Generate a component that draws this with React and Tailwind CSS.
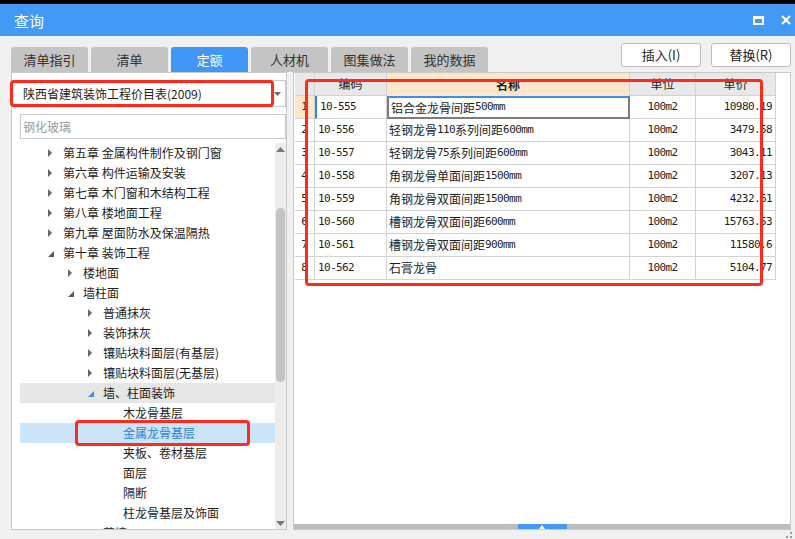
import React from 'react';

const tree = [
  { l: 0, t: '第五章 金属构件制作及钢门窗', a: 'r' },
  { l: 0, t: '第六章 构件运输及安装', a: 'r' },
  { l: 0, t: '第七章 木门窗和木结构工程', a: 'r' },
  { l: 0, t: '第八章 楼地面工程', a: 'r' },
  { l: 0, t: '第九章 屋面防水及保温隔热', a: 'r' },
  { l: 0, t: '第十章 装饰工程', a: 'd' },
  { l: 1, t: '楼地面', a: 'r' },
  { l: 1, t: '墙柱面', a: 'd' },
  { l: 2, t: '普通抹灰', a: 'r' },
  { l: 2, t: '装饰抹灰', a: 'r' },
  { l: 2, t: '镶贴块料面层(有基层)', a: 'r' },
  { l: 2, t: '镶贴块料面层(无基层)', a: 'r' },
  { l: 2, t: '墙、柱面装饰', a: 'd', hl: true },
  { l: 3, t: '木龙骨基层' },
  { l: 3, t: '金属龙骨基层', sel: true },
  { l: 3, t: '夹板、卷材基层' },
  { l: 3, t: '面层' },
  { l: 3, t: '隔断' },
  { l: 3, t: '柱龙骨基层及饰面' },
  { l: 2, t: '幕墙', a: 'r' },
];

const indent = ['pl-[28px]', 'pl-[48px]', 'pl-[68px]', 'pl-[88px]'];

const rows = [
  ['10-555', '铝合金龙骨间距500mm', '10980.19'],
  ['10-556', '轻钢龙骨110系列间距600mm', '3479.58'],
  ['10-557', '轻钢龙骨75系列间距600mm', '3043.11'],
  ['10-558', '角钢龙骨单面间距1500mm', '3207.13'],
  ['10-559', '角钢龙骨双面间距1500mm', '4232.61'],
  ['10-560', '槽钢龙骨双面间距600mm', '15763.53'],
  ['10-561', '槽钢龙骨双面间距900mm', '11580.6'],
  ['10-562', '石膏龙骨', '5104.77'],
];

const tabs = ['清单指引', '清单', '定额', '人材机', '图集做法', '我的数据'];

// ascii bits in the grid use a narrow mono face, like the bitmap font in the original
function Mixed({ text }) {
  return text.split(/([\x00-\x7f]+)/).filter(Boolean).map((p, i) =>
    /^[\x00-\x7f]+$/.test(p)
      ? <span key={i} className="font-['DejaVu_Sans_Mono',monospace] text-[11px] tracking-[-0.6px]">{p}</span>
      : <span key={i}>{p}</span>
  );
}

function Arrow({ type, blue }) {
  if (type === 'r')
    return (
      <svg width="5" height="8" viewBox="0 0 5 8"><path d="M0 0L4 4L0 8Z" fill="#666" /></svg>
    );
  if (type === 'd')
    return (
      <svg width="6" height="6" viewBox="0 0 6 6" className="mt-[2px]"><path d="M6 0V6H0Z" fill={blue ? '#3b8ef0' : '#5a5a5a'} /></svg>
    );
  return null;
}

export default function App() {
  return (
    <div className="relative w-[795px] h-[539px] overflow-hidden bg-black pt-[4px] font-['Noto_Sans_CJK_SC',sans-serif] text-[#1e1e1e]">
      <div className="flex h-[535px] flex-col bg-[#f0f0f0]">
        {/* title bar */}
        <div className="flex h-[32px] items-center justify-between bg-[#4499f7] pl-[14px] pr-[4px]">
          <span className="text-[15px] leading-none text-white">查询</span>
          <div className="flex items-center gap-[17px]">
            <svg width="11" height="9" viewBox="0 0 11 9"><rect x="1" y="1" width="9" height="7" fill="none" stroke="#fff" strokeWidth="2" /><rect x="1" y="0" width="9" height="3" fill="#fff" /></svg>
            <svg width="10" height="10" viewBox="0 0 10 10"><path d="M1 1L9 9M9 1L1 9" stroke="#fff" strokeWidth="2.2" /></svg>
          </div>
        </div>

        {/* tabs + buttons */}
        <div className="flex h-[36px] justify-between pl-[11px] pr-[4px]">
          <div className="flex items-end gap-[3px]">
            {tabs.map((t) => (
              <div
                key={t}
                className={
                  t === '定额'
                    ? 'flex h-[25px] w-[77px] items-center justify-center rounded-t-[3px] bg-[#3f96f4] text-[13px] text-white'
                    : 'flex h-[25px] w-[77px] items-center justify-center rounded-t-[3px] bg-[#c4c4c4] text-[13px] text-[#333]'
                }
              >
                {t}
              </div>
            ))}
          </div>
          <div className="flex gap-[10px] pt-[7px]">
            <div className="flex h-[24px] w-[80px] items-center justify-center rounded-[3px] border border-[#bcbcbc] bg-white text-[13px]">插入(I)</div>
            <div className="flex h-[24px] w-[80px] items-center justify-center rounded-[3px] border border-[#bcbcbc] bg-white text-[13px]">替换(R)</div>
          </div>
        </div>

        {/* main */}
        <div className="flex h-[458px] gap-[6px] pl-[11px]">
          {/* left panel */}
          <div className="flex w-[276px] flex-col border border-[#c9c9c9] bg-white">
            <div className="mt-[7px] flex h-[27px] items-center justify-between border border-[#c9c9c9] pl-[10px] pr-[4px] text-[12px]">
              <span>陕西省建筑装饰工程价目表(2009)</span>
              <svg width="7" height="4" viewBox="0 0 7 4"><path d="M0 0H7L3.5 4Z" fill="#666" /></svg>
            </div>
            <div className="ml-[8px] mt-[7px] flex h-[25px] items-center border border-[#c9c9c9] pl-[2px] text-[12px] text-[#9a9a9a]">钢化玻璃</div>
            <div className="ml-[8px] mt-[4px] flex min-h-0 flex-1 overflow-hidden">
              <div className="flex-1 overflow-hidden">
                {tree.map((n, i) => (
                  <div
                    key={i}
                    className={`flex h-[20px] items-center ${indent[n.l]} ${n.hl ? 'bg-[#e6e6e6]' : ''} ${n.sel ? 'bg-[#cce4f8] text-[#2f7fe0]' : ''}`}
                  >
                    <div className="flex w-[15px] shrink-0 items-center">
                      <Arrow type={n.a} blue={n.hl} />
                    </div>
                    <span className="whitespace-nowrap text-[12px] leading-[20px]">{n.t}</span>
                  </div>
                ))}
              </div>
              {/* scrollbar */}
              <div className="flex w-[11px] flex-col items-center bg-[#ececec]">
                <div className="flex h-[12px] items-center">
                  <svg width="9" height="5" viewBox="0 0 9 5"><path d="M0 5L4.5 0L9 5Z" fill="#777" /></svg>
                </div>
                <div className="mt-[53px] h-[174px] w-[9px] rounded-full bg-[#c3c3c3]" />
                <div className="flex-1" />
                <div className="flex h-[12px] items-center">
                  <svg width="9" height="5" viewBox="0 0 9 5"><path d="M0 0L4.5 5L9 0Z" fill="#777" /></svg>
                </div>
              </div>
            </div>
          </div>

          {/* right panel */}
          <div className="flex w-[498px] flex-col border border-[#c9c9c9] bg-white">
            <div className="ml-[1px] flex flex-col text-[12px]">
              <div className="flex h-[23px]">
                <div className="w-[20px] border-b border-r border-[#d2d2d2] bg-[#e8e8e8]" />
                <div className="flex w-[72px] items-center justify-center border-b border-r border-[#d2d2d2] bg-[#e8e8e8]">编码</div>
                <div className="flex w-[243px] items-center justify-center border-r border-[#d2d2d2] bg-[#fde6c9] font-bold">名称</div>
                <div className="flex w-[66px] items-center justify-center border-b border-r border-[#d2d2d2] bg-[#e8e8e8]">单位</div>
                <div className="flex w-[80px] items-center justify-center border-b border-r border-[#d2d2d2] bg-[#e8e8e8]">单价</div>
              </div>
              {rows.map((r, i) => (
                <div key={r[0]} className="flex h-[23px]">
                  <div className={`flex w-[20px] items-center justify-center border-b border-r border-[#d2d2d2] font-['DejaVu_Sans_Mono',monospace] text-[11px] ${i === 0 ? 'bg-[#fde6c9]' : ''}`}>{i + 1}</div>
                  <div className={`flex w-[72px] items-center border-b border-r border-[#d2d2d2] pl-[3px] ${i === 0 ? 'border-l-2 border-l-[#2f86f0] pl-[1px]' : ''}`}>
                    <Mixed text={r[0]} />
                  </div>
                  <div className={`flex w-[243px] items-center whitespace-nowrap pl-[2px] ${i === 0 ? 'border-2 border-[#7c7c7c] border-t-[#3d8ef0] pl-[0px]' : 'border-b border-r border-[#d2d2d2]'}`}>
                    <Mixed text={r[1]} />
                  </div>
                  <div className="flex w-[66px] items-center justify-center border-b border-r border-[#d2d2d2]">
                    <Mixed text="100m2" />
                  </div>
                  <div className="flex w-[80px] items-center justify-end border-b border-r border-[#d2d2d2] pr-[3px]">
                    <Mixed text={r[2]} />
                  </div>
                </div>
              ))}
            </div>
            <div className="flex-1" />
            <div className="flex h-[5px] justify-center bg-[#bdbdbd]">
              <div className="flex w-[49px] items-end justify-center bg-[#4499f7]">
                <svg width="6" height="4" viewBox="0 0 6 4"><path d="M0 4L3 0L6 4Z" fill="#fff" /></svg>
              </div>
            </div>
          </div>
        </div>

        {/* bottom strip */}
        <div className="flex flex-1 items-end justify-end pb-[1px] pr-[3px]">
          <svg width="6" height="6" viewBox="0 0 6 6"><rect x="4" y="0" width="2" height="2" fill="#999" /><rect x="0" y="4" width="2" height="2" fill="#999" /><rect x="4" y="4" width="2" height="2" fill="#999" /></svg>
        </div>
      </div>

      {/* red annotation boxes */}
      <div className="absolute left-[10px] top-[80px] h-[27px] w-[264px] rounded-[4px] border-[3px] border-[#ff2a1c]" />
      <div className="absolute left-[305px] top-[79px] h-[207px] w-[458px] rounded-[4px] border-[3px] border-[#ff2a1c]" />
      <div className="absolute left-[75px] top-[420px] h-[26px] w-[175px] rounded-[4px] border-[3px] border-[#ff2a1c]" />
    </div>
  );
}
